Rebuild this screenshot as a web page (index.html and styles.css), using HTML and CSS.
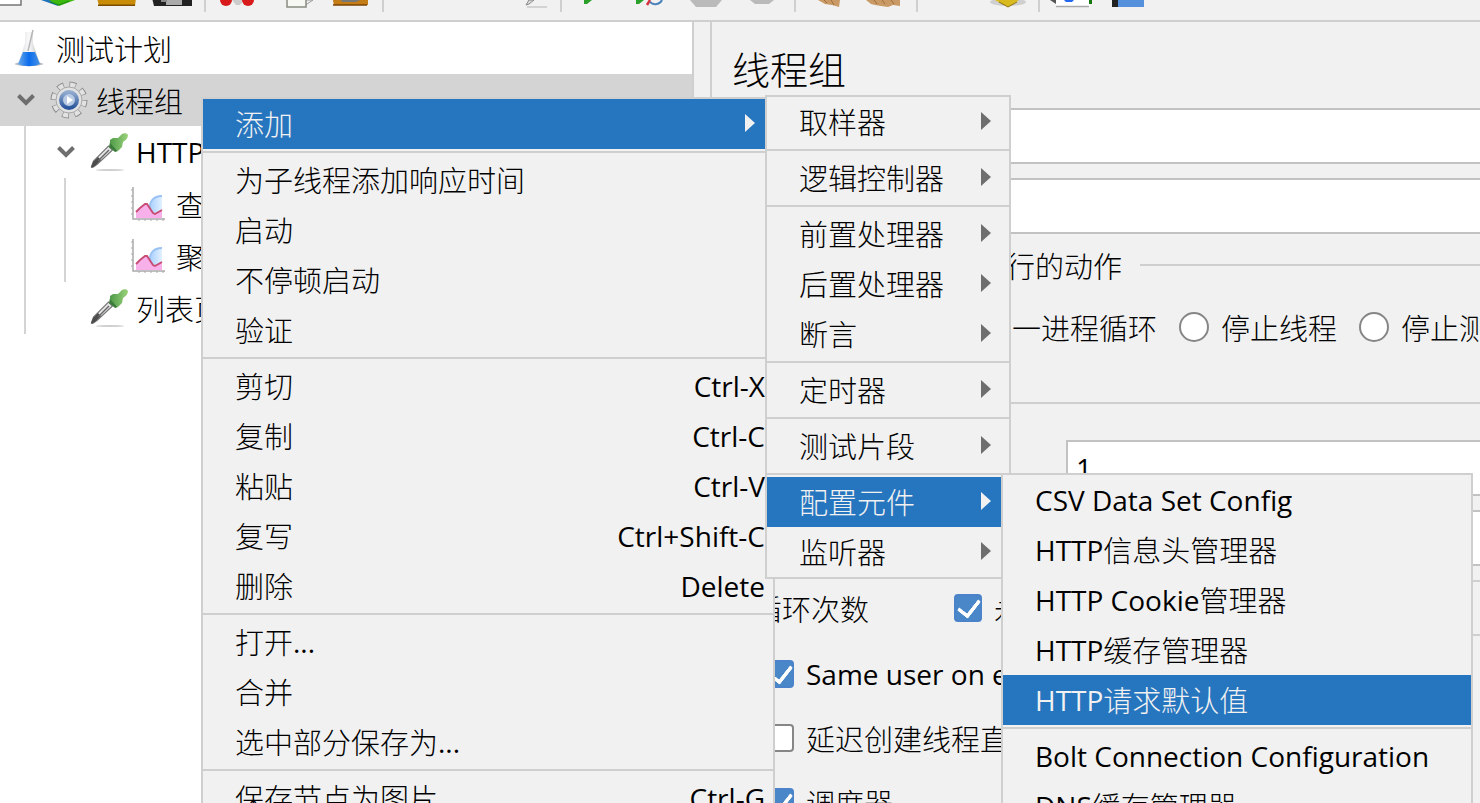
FILE: index.html
```
<!DOCTYPE html>
<html lang="zh-CN">
  <head>
    <meta charset="utf-8" />
    <title>线程组</title>
    <link rel="stylesheet" href="styles.css" />
  </head>
  <body>
    <!-- shared icons -->
    <svg class="defs" width="0" height="0">
      <defs>
        <linearGradient id="glass" x1="0" x2="1">
          <stop offset="0" stop-color="#d3d7da" />
          <stop offset="0.5" stop-color="#fafafa" />
          <stop offset="1" stop-color="#b5babe" />
        </linearGradient>
        <linearGradient id="liquid" x1="0" x2="1">
          <stop offset="0" stop-color="#6aa9ea" />
          <stop offset="0.5" stop-color="#0a6cec" />
          <stop offset="1" stop-color="#4a94e4" />
        </linearGradient>
        <linearGradient id="ring" x1="0" y1="0" x2="0" y2="1">
          <stop offset="0" stop-color="#93acd0" />
          <stop offset="1" stop-color="#2a549c" />
        </linearGradient>
        <linearGradient id="bulb" x1="0" x2="1">
          <stop offset="0" stop-color="#4f9a48" />
          <stop offset="1" stop-color="#9bd37b" />
        </linearGradient>
        <linearGradient id="sky" x1="0" x2="1">
          <stop offset="0" stop-color="#a9d0ff" />
          <stop offset="1" stop-color="#e3f1ff" />
        </linearGradient>
        <symbol id="dropper" viewBox="0 0 38 38">
          <ellipse cx="20" cy="37" rx="14" ry="1" fill="#cfcfcf" />
          <path d="M1.500 34l2-6 15-15 4 4-15 14-4 3z" fill="#e6e6e6" stroke="#777" stroke-width="1.200" />
          <path d="M1 34l2-5 5-5 3 3-5 5-4 3z" fill="#4d4d4d" />
          <path d="M8 28l11-11" stroke="#666" stroke-width="1.500" />
          <path d="M20 9l8 9-3 1-6-5z" fill="#3d7d3c" />
          <path d="M20 7l3-2 5 0 4-4c2-1 5-1 6 1 0 3-2 5-5 7l-1 5-4 4-8-8z" fill="url(#bulb)" />
        </symbol>
        <symbol id="chart" viewBox="0 0 38 38">
          <path d="M3 2v32h32" fill="none" stroke="#aaa" stroke-width="1.500" />
          <path d="M1 5h2M1 11h2M1 17h2M1 23h2M1 29h2M9 34v2M15 34v2M21 34v2M27 34v2M33 34v2" stroke="#aaa" />
          <path d="M32 11c-9 0-14 7-11 14l4 5 7-4z" fill="url(#sky)" />
          <path d="M32 11c-9 0-13 6-12 13" fill="none" stroke="#9ac2f5" stroke-width="1.800" />
          <path d="M6 27l4-4 5-4h2l6 9 2 1 7-4v8H6z" fill="#f7b0ea" />
          <path d="M6 27l4-4 5-4h2l6 9 2 1 7-4" fill="none" stroke="#c84b72" stroke-width="1.800" />
        </symbol>
        <symbol id="chevron" viewBox="0 0 18 12">
          <path d="M1.500 1.500l7.500 7.500 7.500-7.500" fill="none" stroke="#6e6e6e" stroke-width="4" />
        </symbol>
      </defs>
    </svg>

    <div class="toolbar">
      <button title="新建"><svg viewBox="0 0 56 20"><path d="M8 -5h37v10H8z" fill="#fff" stroke="#777" stroke-width="1.500" /></svg></button>
      <button title="模板"><svg viewBox="0 0 56 20"><path d="M9 0l17 6V0z" fill="#1f73b8" /><path d="M17 0l10 6 16-6z" fill="#3cb80e" /><path d="M18 2l9 3 10-4" stroke="#1b8a10" fill="none" /></svg></button>
      <button title="打开"><svg viewBox="0 0 56 20"><path d="M9 -2h39l-1 8H11z" fill="#c98c08" /><path d="M10 5.200h37" stroke="#7a4c00" stroke-width="1.500" /></svg></button>
      <button title="保存"><svg viewBox="0 0 56 20"><path d="M8 -2h40v8H10z" fill="#222" /><path d="M22 0h16v5H22z" fill="#aaa" /><path d="M17 0h6v2h-6z" fill="#888" /></svg></button>
      <span class="sep"></span>
      <button title="剪切"><svg viewBox="0 0 56 20"><path d="M22 0h12l-4 5h-4z" fill="#ccc" /><circle cx="16" cy="0" r="6" fill="#d81a1a" /><circle cx="38" cy="0" r="6" fill="#d81a1a" /></svg></button>
      <button title="复制"><svg viewBox="0 0 56 20"><path d="M38 6l9-6H38z" fill="#eee" stroke="#999" /><path d="M21 -4h19v11H21z" fill="#f7f7f4" stroke="#888c80" stroke-width="1.500" /></svg></button>
      <button title="粘贴"><svg viewBox="0 0 56 20"><path d="M10 -4h36v9H12z" fill="#c47c16" /><path d="M11 5h34" stroke="#7a4300" stroke-width="1.500" /><path d="M19 0h19l-4 2H20z" fill="#777" /></svg></button>
      <span class="sep"></span>
      <button title="展开"></button>
      <button title="折叠"></button>
      <button title="切换"><svg viewBox="0 0 56 20"><path d="M26 5l3-5 5 0-5 4z" fill="#ddd" stroke="#888" /><path d="M27 7h20" stroke="#b5b5b5" /></svg></button>
      <span class="sep"></span>
      <button title="启动"><svg viewBox="0 0 56 20"><path d="M18 0h8l-5 4h-3z" fill="#2aa02a" /></svg></button>
      <button title="不停顿启动"><svg viewBox="0 0 56 20"><path d="M14 0h8l-5 4h-3z" fill="#2aa02a" /><path d="M25 5l3-5" stroke="#d8303c" stroke-width="2.500" /><path d="M28 2c4 4 10 2 12-2" fill="none" stroke="#4a80ba" stroke-width="2" /></svg></button>
      <button title="停止"><svg viewBox="0 0 56 20"><path d="M12 0h32l-6 7H18z" fill="#bababa" /></svg></button>
      <button title="关闭"><svg viewBox="0 0 56 20"><path d="M16 0h24l-5 4H21z" fill="#bababa" /></svg></button>
      <span class="sep"></span>
      <button title="清除"><svg viewBox="0 0 56 20"><path d="M18 0h22l-1 7-7-2-7-1z" fill="#c99a66" /><path d="M24 0l3 3M31 0l3 5" stroke="#a06e3c" /></svg></button>
      <button title="清除全部"><svg viewBox="0 0 56 20"><path d="M10 0h34v6l-7-1-5 2-7-1-6-1-4-1z" fill="#c99a66" /><path d="M18 0l3 4M26 0l3 4M35 0l3 4" stroke="#a06e3c" /></svg></button>
      <span class="sep"></span>
      <button title="搜索"></button>
      <button title="重置搜索"><svg viewBox="0 0 56 20"><ellipse cx="30" cy="2" rx="18" ry="4" fill="#cfcfcf" /><path d="M17 0h24l-11 7z" fill="#d8ba1e" /><path d="M21 2l9 5 9-5" fill="none" stroke="#8d7208" /></svg></button>
      <span class="sep"></span>
      <button title="函数助手"><svg viewBox="0 0 56 20"><path d="M12 0h34v7H12z" fill="#fff" /><path d="M12 6.500h33" stroke="#aaa" stroke-width="1.500" /><path d="M6 0l6 4V0" fill="#555" /><path d="M20 0h10l-2 2h-6z" fill="#2468f0" /><path d="M45 0h3v4h-3z" fill="#14780f" /></svg></button>
      <button title="帮助"><svg viewBox="0 0 56 20"><path d="M12 0h8v7h-8z" fill="#222" /><path d="M18 0h26v7H18z" fill="#5590dc" /></svg></button>
    </div>

    <div class="main">
      <div class="tree">
        <ul>
          <li>
            <div class="node">
              <svg class="icon" viewBox="0 0 38 38">
                <ellipse cx="19" cy="35" rx="14" ry="2" fill="#b3bcc6" />
                <path d="M15 3h8v11l7 21H8l7-21z" fill="url(#glass)" />
                <path d="M13 23h12l5 12c-6 3-16 3-22 0z" fill="url(#liquid)" />
                <path d="M18 22l5-21" stroke="#b6b6b6" stroke-width="1.500" />
              </svg>
              测试计划
            </div>
          </li>
          <li>
            <div class="node selected">
              <span class="twisty"><svg><use href="#chevron" /></svg></span>
              <svg class="icon" viewBox="0 0 38 38">
                <circle cx="19" cy="19" r="15.500" fill="none" stroke="#8c8c8c" stroke-width="6" stroke-dasharray="6.500 5.674" />
                <circle cx="19" cy="19" r="15" fill="none" stroke="#e2e2e2" stroke-width="5" stroke-dasharray="5 6.781" stroke-dashoffset="-0.700" />
                <circle cx="19" cy="19" r="13" fill="#e2e2e2" stroke="#a8a8a8" />
                <circle cx="19" cy="19" r="8" fill="#b9cbe4" stroke="url(#ring)" stroke-width="4" />
                <path d="M17 15l6 4-6 4z" fill="#fff" />
              </svg>
              线程组
            </div>
            <ul class="children">
              <li>
                <div class="node">
                  <span class="twisty"><svg><use href="#chevron" /></svg></span>
                  <svg class="icon"><use href="#dropper" /></svg>
                  <span class="latin">HTTP</span>请求
                </div>
                <ul class="children">
                  <li>
                    <div class="node leaf"><svg class="icon"><use href="#chart" /></svg>查看结果树</div>
                  </li>
                  <li>
                    <div class="node leaf"><svg class="icon"><use href="#chart" /></svg>聚合报告</div>
                  </li>
                </ul>
              </li>
              <li>
                <div class="node leaf"><svg class="icon"><use href="#dropper" /></svg>列表页</div>
              </li>
            </ul>
          </li>
        </ul>
      </div>

      <div class="panel">
        <h1>线程组</h1>
        <div class="field">
          <label for="name">名称：</label>
          <input type="text" id="name" />
        </div>
        <div class="field">
          <label for="comment">注释：</label>
          <input type="text" id="comment" />
        </div>

        <div class="group-title">在取样器错误后要执行的动作</div>
        <div class="radios">
          <label><input type="radio" name="onerror" />继续</label>
          <label><input type="radio" name="onerror" />启动下一进程循环</label>
          <label><input type="radio" name="onerror" />停止线程</label>
          <label><input type="radio" name="onerror" />停止测试</label>
        </div>

        <div class="props">
          <div class="field">
            <label for="threads">线程数：</label>
            <input type="text" id="threads" value="1" />
          </div>
          <div class="field">
            <label for="ramp">时间（秒）：</label>
            <input type="text" id="ramp" />
          </div>
          <div class="field loop">
            <label for="loops">循环次数</label>
            <label class="check"><input type="checkbox" checked />永远</label>
            <input type="text" id="loops" disabled />
          </div>
          <label class="check"><input type="checkbox" checked /><span class="latin">Same user on each iteration</span></label>
          <label class="check"><input type="checkbox" />延迟创建线程直到需要</label>
          <label class="check"><input type="checkbox" checked />调度器</label>
        </div>
      </div>
    </div>

    <!-- context menu -->
    <ul class="menu context">
      <li>
        <button class="active">添加<i class="arrow"></i></button>
        <ul class="menu submenu add">
          <li><button>取样器<i class="arrow"></i></button></li>
          <li class="line"></li>
          <li><button>逻辑控制器<i class="arrow"></i></button></li>
          <li class="line"></li>
          <li><button>前置处理器<i class="arrow"></i></button></li>
          <li><button>后置处理器<i class="arrow"></i></button></li>
          <li><button>断言<i class="arrow"></i></button></li>
          <li class="line"></li>
          <li><button>定时器<i class="arrow"></i></button></li>
          <li class="line"></li>
          <li><button>测试片段<i class="arrow"></i></button></li>
          <li class="line"></li>
          <li>
            <button class="active">配置元件<i class="arrow"></i></button>
            <ul class="menu submenu config">
              <li><button><span class="latin">CSV Data Set Config</span></button></li>
              <li><button><span class="latin">HTTP</span>信息头管理器</button></li>
              <li><button><span class="latin">HTTP Cookie</span>管理器</button></li>
              <li><button><span class="latin">HTTP</span>缓存管理器</button></li>
              <li><button class="active"><span class="latin">HTTP</span>请求默认值</button></li>
              <li class="line"></li>
              <li><button><span class="latin">Bolt Connection Configuration</span></button></li>
              <li><button><span class="latin">DNS</span>缓存管理器</button></li>
            </ul>
          </li>
          <li><button>监听器<i class="arrow"></i></button></li>
        </ul>
      </li>
      <li class="line"></li>
      <li><button>为子线程添加响应时间</button></li>
      <li><button>启动</button></li>
      <li><button>不停顿启动</button></li>
      <li><button>验证</button></li>
      <li class="line"></li>
      <li><button>剪切<span class="key latin">Ctrl-X</span></button></li>
      <li><button>复制<span class="key latin">Ctrl-C</span></button></li>
      <li><button>粘贴<span class="key latin">Ctrl-V</span></button></li>
      <li><button>复写<span class="key latin">Ctrl+Shift-C</span></button></li>
      <li><button>删除<span class="key latin">Delete</span></button></li>
      <li class="line"></li>
      <li><button>打开<span class="latin">...</span></button></li>
      <li><button>合并</button></li>
      <li><button>选中部分保存为<span class="latin">...</span></button></li>
      <li class="line"></li>
      <li><button>保存节点为图片<span class="key latin">Ctrl-G</span></button></li>
    </ul>
  </body>
</html>
```
FILE: styles.css
```
* {
  box-sizing: border-box;
}

body {
  margin: 0;
  height: 100vh;
  display: flex;
  flex-direction: column;
  position: relative;
  overflow: hidden;
  background-color: #f1f1f1;
  color: #000;
  font-family: "Noto Sans CJK SC", sans-serif;
  font-size: 29px;
  font-weight: 300;
  line-height: 40px;
  white-space: nowrap;
}

ul {
  list-style: none;
  margin: 0;
  padding: 0;
}

button,
input {
  font: inherit;
  color: inherit;
}

.latin {
  font-family: "Open Sans", "Noto Sans", sans-serif;
  font-size: 28px;
  font-weight: 400;
}

.defs {
  position: absolute;
}

/* toolbar */
.toolbar {
  display: flex;
  flex: none;
  height: 22px;
  margin-left: -24px;
  border-bottom: 2px solid #cfcfcf;
}

.toolbar button {
  flex: none;
  width: 56px;
  height: 20px;
  padding: 0;
  border: 0;
  background: none;
}

.toolbar svg {
  display: block;
  width: 56px;
  height: 20px;
}

.sep {
  flex: none;
  width: 2px;
  height: 12px;
  margin: 0 4px;
  background-color: #cfcfcf;
}

/* split view */
.main {
  display: flex;
  flex: 1;
  min-height: 0;
}

.tree {
  flex: none;
  width: 694px;
  background-color: #fff;
  border-right: 2px solid #cfcfcf;
}

.node {
  display: flex;
  align-items: center;
  height: 52px;
  padding-left: 10px;
}

.node.selected {
  background-color: #d4d4d4;
}

.icon {
  flex: none;
  width: 38px;
  height: 38px;
  margin-right: 8px;
}

.twisty {
  flex: none;
  display: flex;
  width: 40px;
  padding-left: 7px;
}

.twisty svg {
  width: 18px;
  height: 12px;
}

.children {
  margin-left: 24px;
  border-left: 2px solid #d4d4d4;
}

.children .children {
  margin-left: 38px;
}

.children .node {
  padding-left: 24px;
}

.children .leaf {
  padding-left: 64px;
}

/* right panel */
.panel {
  flex: 1;
  min-width: 0;
  margin-left: 16px;
  padding: 20px 0 0 20px;
  border-left: 2px solid #cfcfcf;
  overflow: hidden;
}

.panel h1 {
  margin: 0 0 14px;
  font-size: 38px;
  font-weight: 300;
  line-height: 52px;
}

.field {
  display: flex;
  align-items: center;
  margin: 0 -20px 14px 0;
}

.field input[type="text"] {
  flex: 1;
  height: 56px;
  padding: 0 8px;
  border: 2px solid #c2c2c2;
  background-color: #fff;
  font-family: "Open Sans", sans-serif;
  font-size: 28px;
  font-weight: 400;
}

.field input:disabled {
  background-color: #f1f1f1;
  border-color: #cfcfcf;
}

.group-title {
  display: flex;
  align-items: center;
  gap: 18px;
  height: 34px;
  padding-left: 13px;
}

.group-title::after {
  content: "";
  flex: 1;
  height: 2px;
  background-color: #cfcfcf;
}

.radios {
  display: flex;
  gap: 22px;
  height: 120px;
  padding: 25px 0 0 29px;
}

.radios label {
  display: flex;
  flex: none;
  align-items: center;
  gap: 12px;
  height: 40px;
}

.radios input {
  appearance: none;
  width: 30px;
  height: 30px;
  margin: 0;
  border: 2px solid #868686;
  border-radius: 50%;
  background-color: #fff;
}

.props {
  padding: 36px 0 0 21px;
  border-top: 2px solid #cfcfcf;
}

.props .field > label:first-child {
  flex: none;
  width: 313px;
}

.props .loop {
  margin-bottom: 6px;
}

.props .loop > label:first-child {
  width: 201px;
}

.check {
  display: flex;
  align-items: center;
  gap: 12px;
}

.props > .check {
  height: 64px;
  padding-left: 13px;
}

.check input {
  appearance: none;
  position: relative;
  flex: none;
  width: 28px;
  height: 28px;
  margin: 0;
  border: 2px solid #868686;
  border-radius: 4px;
  background-color: #fff;
}

.check input:checked {
  border-color: #4a83c9;
  background-color: #4a87c9;
}

.check input:checked::before {
  content: "";
  position: absolute;
  left: 7px;
  top: 1px;
  width: 10px;
  height: 18px;
  border: solid #fff;
  border-width: 0 4px 4px 0;
  border-radius: 2px;
  transform: translate(-1px, -2px) rotate(38deg);
}

/* menus */
.menu {
  position: absolute;
  background-color: #f1f1f1;
  border: 2px solid #cfcfcf;
}

.menu li {
  position: relative;
}

.context {
  left: 201px;
  top: 97px;
  width: 574px;
}

.submenu {
  top: -4px;
  left: calc(100% - 8px);
  z-index: 1;
}

.add {
  width: 246px;
}

.config {
  width: 472px;
}

.menu button {
  display: flex;
  align-items: center;
  width: 100%;
  height: 50px;
  padding: 0 8px 2px 32px;
  border: 0;
  background: none;
  text-align: left;
  white-space: nowrap;
}

.menu button.active {
  background-color: #2675bf;
  color: #f1f1f1;
}

.menu .latin {
  padding-top: 2px;
}

.menu .line {
  height: 2px;
  margin: 2px 0;
  background-color: #cfcfcf;
}

.key {
  margin-left: auto;
}

.arrow {
  margin: 0 10px 0 auto;
  border: solid transparent;
  border-width: 9px 0 9px 10px;
  border-left-color: #6e6e6e;
}

.active .arrow {
  border-left-color: #f1f1f1;
}
```
